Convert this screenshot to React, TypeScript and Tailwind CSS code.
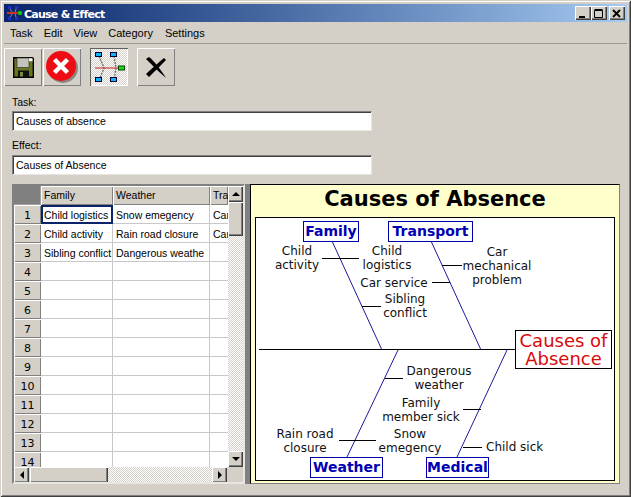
import React from "react";

const bevel = "shadow-[inset_1px_1px_0_#ffffff,inset_-1px_-1px_0_#404040,inset_-2px_-2px_0_#808080]";
const dither = "bg-[repeating-conic-gradient(#d4d0c8_0_25%,#ffffff_0_50%)] bg-[length:2px_2px]";

const rows: string[][] = [
  ["Child logistics", "Snow emegency", "Car"],
  ["Child activity", "Rain road closure", "Car"],
  ["Sibling conflict", "Dangerous weathe", ""],
];

function AppIcon() {
  return (
    <svg width="16" height="16" viewBox="0 0 16 16" className="shrink-0">
      <rect x="2" y="1" width="3" height="3" fill="#1c2fd0" />
      <rect x="9" y="1" width="3" height="3" fill="#1c2fd0" />
      <rect x="2" y="12" width="3" height="3" fill="#1c2fd0" />
      <rect x="9" y="12" width="3" height="3" fill="#1c2fd0" />
      <path d="M4 4 L7 8 L4 12 M10 4 L9 8 L10 12" stroke="#8a8a9a" fill="none" />
      <path d="M1 8 H12" stroke="#d03030" strokeWidth="2" />
      <rect x="12" y="6" width="4" height="4" fill="#18d018" stroke="#0a4a0a" strokeWidth="0.5" />
    </svg>
  );
}

function WinButton({ kind, className = "" }: { kind: "min" | "max" | "close"; className?: string }) {
  return (
    <div className={`w-4 h-3.5 bg-[#d4d0c8] ${bevel} flex items-center justify-center ${className}`}>
      <svg width="10" height="9" viewBox="0 0 10 9">
        {kind === "min" && <rect x="1" y="7" width="6" height="2" fill="#000" />}
        {kind === "max" && (
          <path d="M0.5 1.5 H8.5 V8.5 H0.5 Z M0.5 0.5 H8.5" stroke="#000" fill="none" />
        )}
        {kind === "close" && <path d="M1 1 L8 8 M8 1 L1 8" stroke="#000" strokeWidth="1.8" fill="none" />}
      </svg>
    </div>
  );
}

function Floppy() {
  return (
    <svg width="21" height="21" viewBox="0 0 21 21">
      <path d="M0.7 0.7 H19.5 L20.3 1.5 V20.3 H0.7 Z" fill="#66761f" stroke="#000" strokeWidth="1.4" />
      <rect x="4" y="1" width="12" height="9.5" fill="#c4c4bc" stroke="#333" strokeWidth="0.7" />
      <rect x="16" y="1.2" width="3.5" height="3" fill="#f4f4f0" />
      <rect x="5" y="13.5" width="11" height="7" fill="#111" />
      <rect x="7" y="15" width="3" height="4.5" fill="#7a8a40" />
    </svg>
  );
}

function StopIcon() {
  return (
    <svg width="34" height="34" viewBox="0 0 34 34">
      <circle cx="18" cy="18" r="15" fill="#8a8680" />
      <circle cx="16" cy="16" r="15" fill="#ee0d14" />
      <path d="M9.5 9.5 L22.5 22.5 M22.5 9.5 L9.5 22.5" stroke="#fff" strokeWidth="4.5" fill="none" />
    </svg>
  );
}

function DiagramIcon() {
  return (
    <svg width="32" height="32" viewBox="0 0 32 32">
      <path d="M6 5 L11 17 L6 30 M21 5 L23 17 L21 30" stroke="#777" strokeWidth="1.5" strokeDasharray="2 1" fill="none" />
      <path d="M2 17 H26" stroke="#c82020" strokeWidth="1" />
      <rect x="2.5" y="1.5" width="6" height="4" fill="#10b4f4" stroke="#003" />
      <rect x="17.5" y="1.5" width="6" height="4" fill="#10b4f4" stroke="#003" />
      <rect x="2.5" y="26.5" width="6" height="4" fill="#10b4f4" stroke="#003" />
      <rect x="17.5" y="26.5" width="6" height="4" fill="#10b4f4" stroke="#003" />
      <rect x="25.5" y="15" width="6" height="4" fill="#18d818" stroke="#040" />
    </svg>
  );
}

function CrossIcon() {
  return (
    <svg width="24" height="24" viewBox="0 0 24 24">
      <path d="M2 4 L5 2 C10 6 15 12 22 23 C15 17 9 11 2 4 Z" fill="#000" />
      <path d="M20 3 L22 5 C17 10 11 16 5 22 L2 19 C8 13 14 8 20 3 Z" fill="#000" />
    </svg>
  );
}

function ToolButton({ children, className = "" }: { children: React.ReactNode; className?: string }) {
  return (
    <div className={`w-[38px] h-[38px] flex items-center justify-center bg-[#d4d0c8] shadow-[inset_1px_1px_0_#ffffff,inset_-1px_-1px_0_#808080] ${className}`}>
      {children}
    </div>
  );
}

function Field({ label, value, className = "", gap }: { label: string; value: string; className?: string; gap: string }) {
  return (
    <div className={className}>
      <div className="h-[14px] leading-[14px] text-[#000]">{label}</div>
      <div className={`${gap} w-[360px] h-5 bg-white px-[3px] leading-[18px] border border-t-[#808080] border-l-[#808080] border-r-[#e8e6e0] border-b-[#e8e6e0] shadow-[inset_1px_1px_0_#404040]`}>
        {value}
      </div>
    </div>
  );
}

function Arrow({ dir }: { dir: "up" | "down" | "left" | "right" }) {
  const d = { up: "M4 0 L8 4 H0 Z", down: "M0 0 H8 L4 4 Z", left: "M4 0 V8 L0 4 Z", right: "M0 0 L4 4 L0 8 Z" }[dir];
  const wide = dir === "up" || dir === "down";
  return (
    <svg width={wide ? 8 : 4} height={wide ? 4 : 8} viewBox={wide ? "0 0 8 4" : "0 0 4 8"}>
      <path d={d} fill="#000" />
    </svg>
  );
}

function ScrollBtn({ dir }: { dir: "up" | "down" | "left" | "right" }) {
  return (
    <div className={`w-[15px] h-4 shrink-0 bg-[#d4d0c8] ${bevel} flex items-center justify-center`}>
      <Arrow dir={dir} />
    </div>
  );
}

function DataGrid() {
  const cols = "grid grid-cols-[27px_72px_97px_18px]";
  const headCell = `h-[19px] bg-[#d4d0c8] pl-[3px] leading-[19px] overflow-hidden whitespace-nowrap shadow-[inset_1px_1px_0_#ffffff,inset_-1px_-1px_0_#808080]`;
  const cell = "h-[19px] pl-[3px] leading-[20px] overflow-hidden whitespace-nowrap border-r border-b border-[#c8c8c8] bg-white";
  const all = Array.from({ length: 14 }, (_, i) => rows[i] ?? ["", "", ""]);
  return (
    <div className="w-[233px] h-[300px] shrink-0 flex flex-col border-2 border-t-[#808080] border-l-[#808080] border-r-[#e8e6e0] border-b-[#e8e6e0]">
      <div className="flex h-[281px]">
        <div className="w-[214px] h-[281px] overflow-hidden">
          <div className={cols}>
            <div className="h-[19px] bg-[#808080] shadow-[inset_-1px_-1px_0_#a0a0a0]" />
            <div className={headCell}>Family</div>
            <div className={headCell}>Weather</div>
            <div className={headCell}>Transport</div>
            {all.map((r, i) => (
              <React.Fragment key={i}>
                <div className={`${headCell} !pl-0 !leading-[21px] text-center font-['DejaVu_Sans'] text-[11px]`}>{i + 1}</div>
                <div className={i === 0 ? "h-[19px] pl-[1px] leading-[17px] overflow-hidden whitespace-nowrap border-2 border-[#0a246a] bg-white" : cell}>{r[0]}</div>
                <div className={cell}>{r[1]}</div>
                <div className={`${cell} !border-r-0`}>{r[2]}</div>
              </React.Fragment>
            ))}
          </div>
        </div>
        <div className="w-[15px] h-[281px] flex flex-col">
          <ScrollBtn dir="up" />
          <div className={`w-[15px] h-[34px] bg-[#d4d0c8] ${bevel}`} />
          <div className={`flex-1 w-[15px] ${dither}`} />
          <ScrollBtn dir="down" />
        </div>
      </div>
      <div className="flex h-[15px] bg-[#d4d0c8] overflow-hidden">
        <ScrollBtn dir="left" />
        <div className={`ml-[1px] w-[78px] h-4 bg-[#d4d0c8] ${bevel}`} />
        <div className={`w-[104px] h-4 ${dither}`} />
        <ScrollBtn dir="right" />
      </div>
    </div>
  );
}

function Node({ x, y, w, h, text, red }: { x: number; y: number; w: number; h: number; text: string; red?: boolean }) {
  return (
    <div
      className={`absolute flex items-center justify-center bg-white text-center ${red ? "border border-black text-[#d80a0a] text-[18px] leading-[18px] font-normal" : "border border-[#0000a8] text-[#0000b4] text-[14px] font-bold"}`}
      style={{ left: x - 256, top: y - 218, width: w, height: h }}
    >
      {text}
    </div>
  );
}

function Label({ cx, cy, lines, left }: { cx: number; cy: number; lines: string[]; left?: boolean }) {
  return (
    <div
      className={`absolute text-[12px] leading-[14px] whitespace-nowrap text-[#111] ${left ? "" : "-translate-x-1/2 text-center"}`}
      style={{ left: cx - 256, top: cy - 218 - 7 }}
    >
      {lines.map((l) => (
        <div key={l}>{l}</div>
      ))}
    </div>
  );
}

function Chart() {
  const blue: [number, number, number, number][] = [
    [332, 241, 382, 350],
    [431, 241, 481, 350],
    [347, 457, 398, 350],
    [457, 457, 507, 350],
  ];
  const black: [number, number, number][] = [
    [322, 359, 258.5],
    [432, 450, 282.5],
    [362, 381, 306.5],
    [442, 462, 265.5],
    [385, 403, 378.5],
    [339, 376, 440.5],
    [463, 481, 409.5],
    [463, 482, 447.5],
    [259, 516, 349.5],
  ];
  return (
    <div className="w-[370px] h-[300px] shrink-0 bg-[#ffffcc] border border-t-black border-l-black border-r-[#808080] border-b-[#808080] flex flex-col font-['DejaVu_Sans']">
      <div className="h-[32px] leading-[29px] text-[21px] font-bold text-black text-center">Causes of Absence</div>
      <div className="relative w-[360px] h-[264px] ml-[4px] bg-white border border-black">
        <svg className="absolute left-0 top-0" width="358" height="262" viewBox="256 218 358 262">
          {blue.map(([a, b, c, d], i) => (
            <line key={i} x1={a} y1={b} x2={c} y2={d} stroke="#1a1a9a" strokeWidth="1" />
          ))}
          {black.map(([a, b, y], i) => (
            <line key={i} x1={a} y1={y} x2={b} y2={y} stroke="#000" strokeWidth="1" />
          ))}
        </svg>
        <Node x={303} y={221} w={56} h={21} text="Family" />
        <Node x={388} y={221} w={85} h={21} text="Transport" />
        <Node x={310} y={457} w={73} h={21} text="Weather" />
        <Node x={426} y={457} w={63} h={21} text="Medical" />
        <Node x={515} y={330} w={97} h={39} text="Causes of Absence" red />
        <Label cx={297} cy={251} lines={["Child", "activity"]} />
        <Label cx={387} cy={251} lines={["Child", "logistics"]} />
        <Label cx={394} cy={283} lines={["Car service"]} />
        <Label cx={405} cy={299} lines={["Sibling", "conflict"]} />
        <Label cx={497} cy={252} lines={["Car", "mechanical", "problem"]} />
        <Label cx={439} cy={371} lines={["Dangerous", "weather"]} />
        <Label cx={421} cy={403} lines={["Family", "member sick"]} />
        <Label cx={305} cy={434} lines={["Rain road", "closure"]} />
        <Label cx={410} cy={434} lines={["Snow", "emegency"]} />
        <Label cx={486} cy={447} lines={["Child sick"]} left />
      </div>
    </div>
  );
}

export default function App() {
  return (
    <div className="w-[631px] h-[497px] overflow-hidden bg-[#d4d0c8] font-['Liberation_Sans',sans-serif] text-[10.5px] text-black flex flex-col p-1 shadow-[inset_1px_1px_0_#d4d0c8,inset_-1px_-1px_0_#404040,inset_2px_2px_0_#ffffff,inset_-2px_-2px_0_#808080]">
      <div className="h-[18px] shrink-0 flex items-center pl-[2px] pr-[2px] bg-gradient-to-r from-[#0a246a] to-[#a6caf0]">
        <AppIcon />
        <span className="ml-[2px] mt-[5px] text-white font-bold text-[11px] font-['DejaVu_Sans'] tracking-[-0.75px]">Cause &amp; Effect</span>
        <div className="flex-1" />
        <WinButton kind="min" />
        <WinButton kind="max" />
        <WinButton kind="close" className="ml-[2px]" />
      </div>
      <div className="h-[22px] shrink-0 flex items-center pt-[2px] border-b border-[#a09c94] text-[11px]">
        <span className="ml-[6px]">Task</span>
        <span className="ml-[11px]">Edit</span>
        <span className="ml-[11px]">View</span>
        <span className="ml-[11px]">Category</span>
        <span className="ml-[12px]">Settings</span>
      </div>
      <div className="flex items-start mt-[4px] shrink-0">
        <ToolButton><Floppy /></ToolButton>
        <ToolButton className="ml-[1px]"><StopIcon /></ToolButton>
        <ToolButton className={`ml-[9px] !shadow-[inset_1px_1px_0_#606060,inset_-1px_-1px_0_#ffffff] ${dither}`}><DiagramIcon /></ToolButton>
        <ToolButton className="ml-[9px]"><CrossIcon /></ToolButton>
      </div>
      <Field label="Task:" value="Causes of absence" gap="mt-[2px]" className="ml-2 mt-[9px]" />
      <Field label="Effect:" value="Causes of Absence" gap="mt-[3px]" className="ml-2 mt-[7px]" />
      <div className="flex ml-2 mt-[9px]">
        <DataGrid />
        <div className="w-[5px] h-[300px] bg-[#808080]" />
        <Chart />
      </div>
    </div>
  );
}
